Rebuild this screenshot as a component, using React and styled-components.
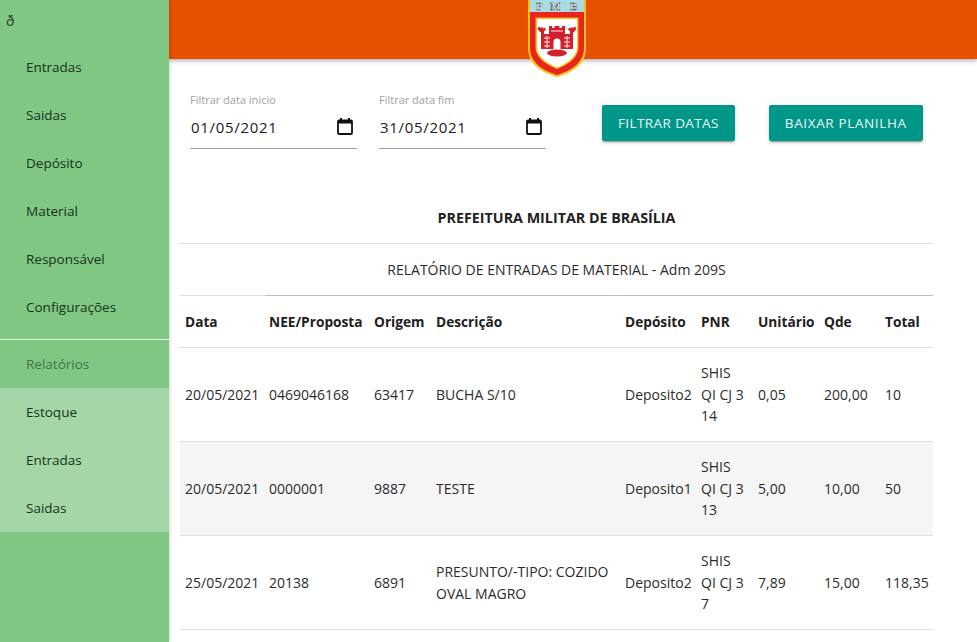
import React from 'react'
import styled, { createGlobalStyle } from 'styled-components'

const GlobalStyle = createGlobalStyle`
    html, body {
        margin: 0;
        height: 100%;
        overflow: hidden;
        background: #fff;
    }
    body {
        font-family: "Open Sans", "Noto Sans", sans-serif;
        color: #212121;
    }
`

const rows = [
    { data: '20/05/2021', nee: '0469046168', origem: '63417', desc: 'BUCHA S/10', dep: 'Deposito2', pnr: 'SHIS QI CJ 3 14', unit: '0,05', qde: '200,00', total: '10' },
    { data: '20/05/2021', nee: '0000001', origem: '9887', desc: 'TESTE', dep: 'Deposito1', pnr: 'SHIS QI CJ 3 13', unit: '5,00', qde: '10,00', total: '50' },
    { data: '25/05/2021', nee: '20138', origem: '6891', desc: 'PRESUNTO/-TIPO: COZIDO OVAL MAGRO', dep: 'Deposito2', pnr: 'SHIS QI CJ 3 7', unit: '7,89', qde: '15,00', total: '118,35' },
]

const columns = [85, 105, 62, 189, 76, 57, 66, 61, 52]
const headers = ['Data', 'NEE/Proposta', 'Origem', 'Descrição', 'Depósito', 'PNR', 'Unitário', 'Qde', 'Total']

const CalendarIcon = () => (
    <CalendarSvg width="16" height="17" viewBox="0 0 16 17" fill="none">
        <path d="M4 0v3M12 0v3" stroke="#111" strokeWidth="2" />
        <rect x="1" y="2.500" width="14" height="13.500" rx="1" stroke="#111" strokeWidth="1.800" />
        <rect x="1" y="2.500" width="14" height="3" fill="#111" />
    </CalendarSvg>
)

const Shield = () => (
    <svg width="60" height="77" viewBox="0 0 60 77">
        <path d="M1 -4H59V48C59 65 44 73 30 77C16 73 1 65 1 48Z" fill="#f6c21c" />
        <path d="M3 -4H57V48C57 63 43 71 30 75C17 71 3 63 3 48Z" fill="#e8241c" />
        <rect x="3" y="0" width="54" height="12" fill="#a9dbe4" />
        <text x="9 23 43" y="10" fontFamily="Liberation Serif, serif" fontWeight="700" fontSize="11" fill="#fff" stroke="#333" strokeWidth="0.400">PMB</text>
        <path d="M8.500 17.500H51.500V47C51.500 58 40 65 30 69C20 65 8.500 58 8.500 47Z" fill="#f6c21c" />
        <path d="M10 19H50V47C50 57 39.500 63.500 30 67.500C20.500 63.500 10 57 10 47Z" fill="#fff" />
        <path d="M22 26h3v2h2.500v-2h5v2H35v-2h3v8h5v-3l-2-1 1-2.500 2 1 .5-1.500 2.500 1 .5-1.500 2 1.500-1.500 3-2 1.500V49H14V32.500l-2-1.500-1.500-3 2-1.500 .5 1.500 2.500-1 .5 1.500 2-1 1 2.500-2 1v3h5Z" fill="#d2202c" />
        <path d="M26.500 49v-7a3.500 3.500 0 0 1 7 0v7Z" fill="#fff" />
        <path d="M17 38h6M37 38h6M17 42h6M37 42h6M17 46h6M37 46h6M20 36v12M40 36v12M24 31h12" stroke="#fff" strokeWidth="0.900" />
        <ellipse cx="30" cy="53" rx="10" ry="3.500" fill="#d2202c" />
    </svg>
)

export default function App() {
    return (
        <Page>
            <GlobalStyle />
            <Sidebar>
                <Toggle>ð</Toggle>
                <NavItem>Entradas</NavItem>
                <NavItem>Saidas</NavItem>
                <NavItem>Depósito</NavItem>
                <NavItem>Material</NavItem>
                <NavItem>Responsável</NavItem>
                <NavItem>Configurações</NavItem>
                <Divider />
                <NavItem $muted>Relatórios</NavItem>
                <SubMenu>
                    <NavItem>Estoque</NavItem>
                    <NavItem>Entradas</NavItem>
                    <NavItem>Saidas</NavItem>
                </SubMenu>
            </Sidebar>
            <Main>
                <Header>
                    <Logo><Shield /></Logo>
                </Header>
                <Filters>
                    <DateField>
                        <DateLabel>Filtrar data inicio</DateLabel>
                        <DateValue>01/05/2021<CalendarIcon /></DateValue>
                    </DateField>
                    <DateField>
                        <DateLabel>Filtrar data fim</DateLabel>
                        <DateValue>31/05/2021<CalendarIcon /></DateValue>
                    </DateField>
                    <FilterButton>Filtrar datas</FilterButton>
                    <DownloadButton>Baixar planilha</DownloadButton>
                </Filters>
                <Report>
                    <colgroup>
                        {columns.map((w, i) => <col key={i} width={w} />)}
                    </colgroup>
                    <thead>
                        <tr>
                            <ReportTitle colSpan={9}>PREFEITURA MILITAR DE BRASÍLIA</ReportTitle>
                        </tr>
                        <tr>
                            <ReportSubtitle colSpan={9}>RELATÓRIO DE ENTRADAS DE MATERIAL - Adm 209S</ReportSubtitle>
                        </tr>
                        <tr>
                            {headers.map((h, i) => <HeadCell key={h} $first={i === 0}>{h}</HeadCell>)}
                        </tr>
                    </thead>
                    <tbody>
                        {rows.map((r, i) => (
                            <Row key={i} $striped={i % 2 === 1}>
                                <Cell>{r.data}</Cell>
                                <Cell>{r.nee}</Cell>
                                <Cell>{r.origem}</Cell>
                                <Cell>{r.desc}</Cell>
                                <Cell>{r.dep}</Cell>
                                <Cell>{r.pnr}</Cell>
                                <Cell>{r.unit}</Cell>
                                <Cell>{r.qde}</Cell>
                                <Cell>{r.total}</Cell>
                            </Row>
                        ))}
                    </tbody>
                </Report>
            </Main>
        </Page>
    )
}

// Styled components
const Page = styled.div`
    display: flex;
    height: 642px;
    overflow: hidden;
`

const Sidebar = styled.nav`
    flex: 0 0 169px;
    background: #81c784;
    box-shadow: 0 0 4px rgba(0, 0, 0, 0.25);
    z-index: 2;
`

const Toggle = styled.div`
    height: 43px;
    padding: 11px 0 0 6px;
    box-sizing: border-box;
    font-size: 14px;
    line-height: 19px;
    color: #263a28;
`

const NavItem = styled.div`
    height: 48px;
    padding-left: 26px;
    font-size: 13.500px;
    line-height: 48px;
    color: ${(p) => (p.$muted ? '#40734a' : '#17331b')};
`

const Divider = styled.div`
    height: 1px;
    margin-top: 8px;
    background: #e8f5e9;
`

const SubMenu = styled.div`
    background: #a5d6a7;
`

const Main = styled.main`
    flex: 1;
    min-width: 0;
    position: relative;
`

const Header = styled.header`
    height: 59px;
    background: #e65100;
    box-shadow: 0 2px 4px rgba(0, 0, 0, 0.3);
`

const Logo = styled.div`
    position: absolute;
    left: 358px;
    top: 0;
    line-height: 0;
`

const Filters = styled.div`
    display: flex;
    align-items: flex-start;
    padding: 34px 0 0 21px;
    height: 132px;
    box-sizing: border-box;
`

const DateField = styled.div`
    width: 167px;
    margin-right: 22px;
`

const DateLabel = styled.div`
    font-size: 11px;
    line-height: 14px;
    color: #9e9e9e;
`

const DateValue = styled.div`
    display: flex;
    align-items: center;
    justify-content: space-between;
    height: 39px;
    padding: 0 4px 2px 1px;
    border-bottom: 1px solid #9e9e9e;
    font-size: 15px;
    letter-spacing: 0.7px;
    color: #212121;
`

const CalendarSvg = styled.svg`
    margin-top: -1px;
`

const FilterButton = styled.button`
    height: 36px;
    margin-top: 12px;
    margin-left: 34px;
    padding: 0 16px;
    border: 0;
    border-radius: 2px;
    background: #009688;
    color: #e8f8f6;
    font-family: inherit;
    font-size: 13.500px;
    letter-spacing: 0.4px;
    text-transform: uppercase;
    box-shadow: 0 2px 2px rgba(0, 0, 0, 0.14), 0 3px 1px -2px rgba(0, 0, 0, 0.2), 0 1px 5px rgba(0, 0, 0, 0.12);
`

const DownloadButton = styled(FilterButton)`
    margin-left: 34px;
    letter-spacing: 0.63px;
`

const Report = styled.table`
    width: 753px;
    margin-left: 11px;
    table-layout: fixed;
    border-collapse: collapse;
    font-size: 14px;
    color: #2b2b2b;
`

const ReportTitle = styled.th`
    height: 52px;
    padding: 0;
    border-bottom: 1px solid #e0e0e0;
    font-size: 14.300px;
    font-weight: 700;
    color: #212121;
    text-align: center;
`

const ReportSubtitle = styled.th`
    height: 51px;
    padding: 0;
    font-size: 14px;
    font-weight: 400;
    text-align: center;
`

const HeadCell = styled.th`
    height: 51px;
    padding: 0 0 0 ${(p) => (p.$first ? '5px' : '4px')};
    border-top: 1px solid ${(p) => (p.$first ? '#e0e0e0' : '#bdbdbd')};
    border-bottom: 1px solid #e0e0e0;
    font-size: 13.700px;
    font-weight: 700;
    color: #212121;
    text-align: left;
`

const Row = styled.tr`
    height: 94px;
    background: ${(p) => (p.$striped ? '#f5f5f5' : 'transparent')};
`

const Cell = styled.td`
    padding: 0 6px 0 4px;
    border-bottom: 1px solid #e0e0e0;
    line-height: 21.500px;

    &:first-child {
        padding-left: 5px;
        padding-right: 0;
    }
`
